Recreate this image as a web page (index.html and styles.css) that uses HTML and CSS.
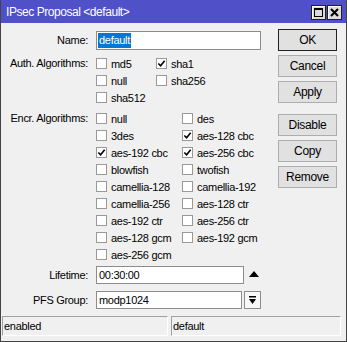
FILE: index.html
```html
<!DOCTYPE html>
<html lang="en">
<head>
    <meta charset="UTF-8">
    <title>IPsec Proposal &lt;default&gt;</title>
    <link rel="stylesheet" href="styles.css">
</head>
<body>
<div class="window">
    <div class="titlebar">
        <span class="title">IPsec Proposal &lt;default&gt;</span>
        <div class="title-btns">
            <span class="tbtn">
                <svg width="9" height="9" viewBox="0 0 9 9"><rect x="0.5" y="0.5" width="8" height="8" fill="none" stroke="#000"/><rect x="0" y="0" width="9" height="2" fill="#000"/></svg>
            </span>
            <span class="tbtn">
                <svg width="9" height="9" viewBox="0 0 9 9"><path d="M1 1 L8 8 M8 1 L1 8" stroke="#000" stroke-width="2"/></svg>
            </span>
        </div>
    </div>

    <div class="main">
        <div class="form">
            <div class="label">Name:</div>
            <div class="field name-field"><span class="sel">default</span></div>

            <div class="label group">Auth. Algorithms:</div>
            <div class="checks auth group">
                <label class="opt"><span class="box"></span>md5</label>
                <label class="opt"><span class="box"><svg class="tick" viewBox="0 0 10 10"><path d="M1.5 5 L4 7.5 L8.5 2"/></svg></span>sha1</label>
                <label class="opt"><span class="box"></span>null</label>
                <label class="opt"><span class="box"></span>sha256</label>
                <label class="opt"><span class="box"></span>sha512</label>
            </div>

            <div class="label group2">Encr. Algorithms:</div>
            <div class="checks encr group2">
                <label class="opt"><span class="box"></span>null</label>
                <label class="opt"><span class="box"></span>des</label>
                <label class="opt"><span class="box"></span>3des</label>
                <label class="opt"><span class="box"><svg class="tick" viewBox="0 0 10 10"><path d="M1.5 5 L4 7.5 L8.5 2"/></svg></span>aes-128 cbc</label>
                <label class="opt"><span class="box"><svg class="tick" viewBox="0 0 10 10"><path d="M1.5 5 L4 7.5 L8.5 2"/></svg></span>aes-192 cbc</label>
                <label class="opt"><span class="box"><svg class="tick" viewBox="0 0 10 10"><path d="M1.5 5 L4 7.5 L8.5 2"/></svg></span>aes-256 cbc</label>
                <label class="opt"><span class="box"></span>blowfish</label>
                <label class="opt"><span class="box"></span>twofish</label>
                <label class="opt"><span class="box"></span>camellia-128</label>
                <label class="opt"><span class="box"></span>camellia-192</label>
                <label class="opt"><span class="box"></span>camellia-256</label>
                <label class="opt"><span class="box"></span>aes-128 ctr</label>
                <label class="opt"><span class="box"></span>aes-192 ctr</label>
                <label class="opt"><span class="box"></span>aes-256 ctr</label>
                <label class="opt"><span class="box"></span>aes-128 gcm</label>
                <label class="opt"><span class="box"></span>aes-192 gcm</label>
                <label class="opt"><span class="box"></span>aes-256 gcm</label>
            </div>

            <div class="label row-life">Lifetime:</div>
            <div class="inline row-life">
                <div class="field life-field">00:30:00</div>
                <svg class="up" width="10" height="6" viewBox="0 0 10 6"><polygon points="0,6 10,6 5,0" fill="#000"/></svg>
            </div>

            <div class="label row-pfs">PFS Group:</div>
            <div class="inline row-pfs">
                <div class="field pfs-field">modp1024</div>
                <span class="drop">
                    <svg width="9" height="9" viewBox="0 0 9 9"><rect x="1" y="0" width="7" height="1.5" fill="#000"/><polygon points="1,3 8,3 4.5,8" fill="#000"/></svg>
                </span>
            </div>
        </div>

        <div class="buttons">
            <button class="btn default">OK</button>
            <button class="btn">Cancel</button>
            <button class="btn">Apply</button>
            <button class="btn gap">Disable</button>
            <button class="btn">Copy</button>
            <button class="btn">Remove</button>
        </div>
    </div>

    <div class="statusbar">
        <div class="panel">enabled</div>
        <div class="panel">default</div>
    </div>
</div>
</body>
</html>
```

FILE: styles.css
```css
html, body {
    margin: 0;
    padding: 0;
}
body {
    font-family: "Liberation Sans", Arial, sans-serif;
    font-size: 11px;
    letter-spacing: -0.3px;
    color: #000;
    background: #f0f0f0;
}
.window {
    width: 347px;
    height: 342px;
    box-sizing: border-box;
    border: 1px solid #444;
    border-top-color: #4c4cc0;
    background: #f0f0f0;
    display: flex;
    flex-direction: column;
}

/* title bar */
.titlebar {
    height: 22px;
    margin-top: -1px;
    padding-top: 1px;
    background: #5050c8;
    display: flex;
    align-items: center;
    justify-content: space-between;
    padding-left: 5px;
    padding-right: 4px;
}
.title {
    color: #fff;
    font-size: 12px;
    letter-spacing: -0.45px;
}
.title-btns {
    display: flex;
    gap: 1px;
}
.tbtn {
    width: 15px;
    height: 15px;
    box-sizing: border-box;
    border: 1px solid #202020;
    background: #dcdcdc;
    box-shadow: inset 1px 1px 0 #fff;
    display: flex;
    align-items: center;
    justify-content: center;
}

/* main area */
.main {
    flex: 1;
    display: flex;
    padding-right: 9px;
}
.form {
    flex: 1;
    display: grid;
    grid-template-columns: 87px 1fr;
    column-gap: 8px;
    align-content: start;
    padding-top: 8px;
}
.label {
    text-align: right;
    line-height: 19px;
    white-space: nowrap;
}
.field {
    height: 19px;
    box-sizing: border-box;
    border: 1px solid #8c8c8c;
    background: #fff;
    line-height: 17px;
    padding-left: 1px;
}
.name-field {
    width: 165px;
}
.sel {
    background: #0078d7;
    color: #fff;
    padding: 0 1px;
    display: inline-block;
    line-height: 15px;
}

.group {
    margin-top: 5px;
}
.group2 {
    margin-top: 4px;
}
.label.group, .label.group2 {
    line-height: 17px;
}
.checks {
    display: grid;
    grid-auto-rows: 17px;
}
.checks.auth {
    grid-template-columns: 60px 1fr;
}
.checks.encr {
    grid-template-columns: 86px 1fr;
}
.opt {
    display: flex;
    align-items: center;
    gap: 4px;
    white-space: nowrap;
}
.box {
    width: 11px;
    height: 11px;
    box-sizing: border-box;
    border: 1px solid #999;
    background: #fff;
    display: flex;
    align-items: center;
    justify-content: center;
    flex-shrink: 0;
}
.tick {
    width: 9px;
    height: 9px;
    fill: none;
    stroke: #000;
    stroke-width: 1.8;
}

.row-life {
    margin-top: 3px;
}
.row-pfs {
    margin-top: 7px;
}
.row-life.label, .row-pfs.label {
    line-height: 18px;
}
.inline {
    display: flex;
    align-items: center;
}
.inline .field {
    height: 18px;
    line-height: 16px;
    padding-left: 2px;
}
.life-field {
    width: 148px;
}
.up {
    margin-left: 5px;
    margin-top: -2px;
}
.pfs-field {
    width: 146px;
}
.drop {
    width: 17px;
    height: 18px;
    box-sizing: border-box;
    margin-left: 2px;
    border: 1px solid #8c8c8c;
    background: #f7f7f7;
    display: flex;
    align-items: center;
    justify-content: center;
}

/* buttons column */
.buttons {
    width: 59px;
    display: flex;
    flex-direction: column;
    gap: 4px;
    padding-top: 6px;
}
.btn {
    height: 22px;
    box-sizing: border-box;
    border: 1px solid #adadad;
    background: #e1e1e1;
    font-family: "Liberation Sans", Arial, sans-serif;
    font-size: 12px;
    letter-spacing: -0.3px;
    color: #000;
    padding: 0;
}
.btn.default {
    border-color: #222;
}
.btn.gap {
    margin-top: 7px;
}

/* status bar */
.statusbar {
    display: grid;
    grid-template-columns: 166px 1fr;
    column-gap: 3px;
    margin: 0 5px 5px 1px;
}
.panel {
    height: 20px;
    box-sizing: border-box;
    border: 1px solid;
    border-color: #a0a0a0 #fff #fff #a0a0a0;
    line-height: 18px;
    padding-left: 1px;
}
```
